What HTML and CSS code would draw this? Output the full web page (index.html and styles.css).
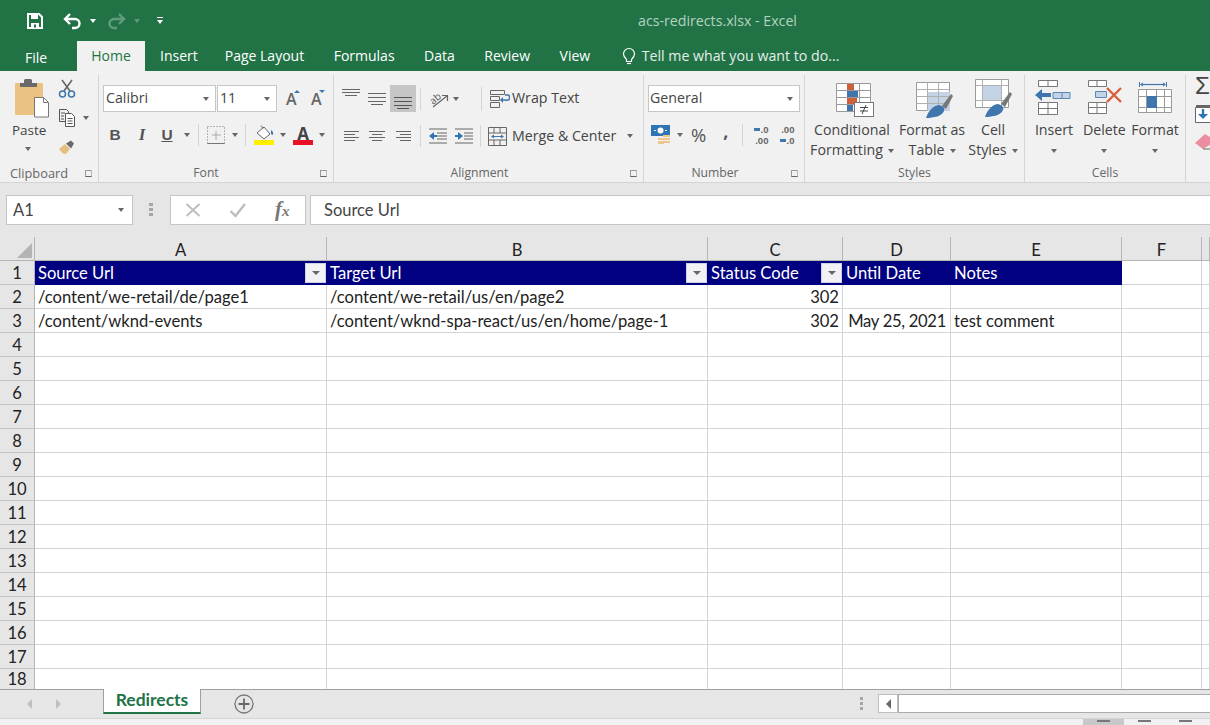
FILE: index.html
```html
<!DOCTYPE html>
<html lang="en">
<head>
<meta charset="utf-8">
<title>acs-redirects.xlsx - Excel</title>
<link rel="stylesheet" href="styles.css">
</head>
<body>
<div class="app">
  <header class="titlebar">
    <div class="qat">
      <svg class="q-save" width="18" height="18" viewBox="0 0 18 18"><path d="M2 2h11l3 3v11H2z" fill="none" stroke="#fff" stroke-width="2"/><path d="M5 2h7v5H5zM5 11h8v5H5z" fill="#fff"/><path d="M8 12.500h2v3H8z" fill="#217346"/></svg>
      <svg class="q-undo" width="20" height="18" viewBox="0 0 20 18"><path d="M8 2 3 7l5 5M3 7h10a4.500 4.500 0 0 1 0 9h-3" fill="none" stroke="#fff" stroke-width="2.400"/></svg>
      <i class="caret caret-white q-c1"></i>
      <svg class="q-redo" width="20" height="18" viewBox="0 0 20 18"><path d="M12 2l5 5-5 5M17 7H7a4.500 4.500 0 0 0 0 9h3" fill="none" stroke="#5f9c7d" stroke-width="2.400"/></svg>
      <i class="caret caret-dim q-c2"></i>
      <svg class="q-more" width="8" height="10" viewBox="0 0 8 10"><path d="M1 1.500h6" stroke="#fff" stroke-width="1"/><path d="M1 4h6L4 8z" fill="#fff"/></svg>
    </div>
    <div class="doc-title">acs-redirects.xlsx - Excel</div>
  </header>

  <nav class="tabs">
    <span class="tab tab-file">File</span>
    <span class="tab tab-active">Home</span>
    <span class="tab tab-insert">Insert</span>
    <span class="tab">Page Layout</span>
    <span class="tab">Formulas</span>
    <span class="tab">Data</span>
    <span class="tab">Review</span>
    <span class="tab">View</span>
    <span class="tell">
      <svg width="14" height="18" viewBox="0 0 14 18"><path d="M4.500 12.500C3 11 1.500 9.500 1.500 7a5.500 5.500 0 0 1 11 0c0 2.500-1.500 4-3 5.500v2h-5z" fill="none" stroke="#fff" stroke-width="1.200"/><path d="M5 16.500h4" stroke="#fff" stroke-width="1.200"/></svg>
      Tell me what you want to do...
    </span>
  </nav>

  <section class="ribbon">
    <div class="group g-clip">
      <div class="g-body clip-body">
        <div class="paste">
          <svg width="36" height="40" viewBox="0 0 36 40"><rect x="1" y="5" width="28" height="32" rx="1" fill="#eac282"/><path d="M6 9V5h4V2a2 2 0 0 1 2-1h4a2 2 0 0 1 2 1v3h5v4z" fill="#6a6a6a"/><path d="M20.500 19.500h9l5 5v14.500h-14z" fill="#fff" stroke="#777"/><path d="M29.500 19.500v5h5" fill="none" stroke="#777"/></svg>
          <span class="paste-label">Paste</span>
          <i class="caret"></i>
        </div>
        <div class="clip-tools">
          <svg width="18" height="19" viewBox="0 0 18 19"><path d="M4 1l8 11M14 1L6 12" stroke="#666" stroke-width="1.600" fill="none"/><circle cx="4.500" cy="15" r="3" fill="none" stroke="#3f76ad" stroke-width="1.500"/><circle cx="13.500" cy="15" r="3" fill="none" stroke="#3f76ad" stroke-width="1.500"/></svg>
          <div class="copy-row">
            <svg width="18" height="19" viewBox="0 0 18 19"><path d="M1.500 1.500h7l2 2v10h-9z" fill="#f1f1f1" stroke="#555"/><path d="M7.500 5.500h6l3 3v10h-9z" fill="#fff" stroke="#555"/><path d="M3 5h4M3 8h3M3 11h3M9.500 10.500h5M9.500 13h5M9.500 15.500h5" stroke="#555"/></svg>
            <i class="caret"></i>
          </div>
          <svg width="18" height="16" viewBox="0 0 18 16"><path d="M1 10l6-5 5 5-4 5c-3 0-5-2-7-5z" fill="#e6bf80"/><path d="M8 4.500l5-3 3 3-3 5z" fill="#6a6a6a"/></svg>
        </div>
      </div>
      <div class="g-label">Clipboard<i class="launcher"></i></div>
    </div>

    <div class="group g-font">
      <div class="g-body">
        <div class="font-row1">
          <div class="select font-name"><span>Calibri</span><i class="caret"></i></div>
          <div class="select font-size"><span>11</span><i class="caret"></i></div>
          <span class="grow">A<i class="tri-up"></i></span>
          <span class="grow grow2">A<i class="tri-down"></i></span>
        </div>
        <div class="font-row2">
          <b class="fmt">B</b>
          <i class="fmt fmt-i">I</i>
          <u class="fmt fmt-u">U</u>
          <i class="caret"></i>
          <i class="vsep"></i>
          <svg class="border-ic" width="18" height="18" viewBox="0 0 18 18"><path d="M.5.500h17v17H.5z" fill="none" stroke="#777" stroke-dasharray="1 2"/><path d="M9 5v9M5 9h9" stroke="#aaa" fill="none"/><path d="M.5 17.500h17" stroke="#777"/></svg>
          <i class="caret"></i>
          <i class="vsep"></i>
          <svg class="fill-ic" width="21" height="22" viewBox="0 0 21 22"><path d="M3 9l7-6 6 7-6 5z" fill="#fff" stroke="#666"/><path d="M7 1.500l2 3" stroke="#666"/><path d="M17 6c2 1 2.500 3 2 5l-2-1z" fill="#3f76ad"/><rect y="16" width="20" height="5" fill="#ffee00"/></svg>
          <i class="caret"></i>
          <span class="color-a">A</span>
          <i class="caret"></i>
        </div>
      </div>
      <div class="g-label">Font<i class="launcher"></i></div>
    </div>

    <div class="group g-align">
      <div class="g-body">
        <div class="align-row1">
          <svg width="18" height="8" viewBox="0 0 18 8"><path d="M0 .5h18M0 3.500h18M3 6.500h12" stroke="#666"/></svg>
          <svg width="18" height="12" viewBox="0 0 18 12"><path d="M0 .5h18M0 4.500h18M0 8.500h18M3 11.500h12" stroke="#666"/></svg>
          <span class="align-active"><svg width="18" height="12" viewBox="0 0 18 12"><path d="M0 .5h18M0 4.500h18M0 8.500h18M3 11.500h12" stroke="#555"/></svg></span>
          <i class="vsep"></i>
          <svg class="orient-ic" width="24" height="22" viewBox="-2 -2 24 22"><text class="orient-text" x="1" y="12" transform="rotate(-40 7 8)">ab</text><path d="M5 17L19 6M14 5.500h5.500V11" fill="none" stroke="#666" stroke-width="1.200"/></svg>
          <i class="caret"></i>
          <i class="vsep vsep-wrap"></i>
          <svg width="20" height="18" viewBox="0 0 20 18"><path d="M.5.500h14v4H.5zM.5 6.500h9v4h-9zM.5 12.500h9v5h-9z" fill="none" stroke="#666"/><path d="M11 10h5a2.500 2.500 0 0 0 2-5h-3" fill="none" stroke="#3f76ad" stroke-width="1.600"/><path d="M13 7l-3 3 3 3z" fill="#3f76ad"/></svg>
          <span class="btn-text">Wrap Text</span>
        </div>
        <div class="align-row2">
          <svg width="15" height="11" viewBox="0 0 15 11"><path d="M0 .5h15M0 3.500h11M0 6.500h15M0 9.500h11" stroke="#666"/></svg>
          <svg width="16" height="11" viewBox="0 0 16 11"><path d="M0 .5h16M3 3.500h10M0 6.500h16M3 9.500h10" stroke="#666"/></svg>
          <svg width="15" height="11" viewBox="0 0 15 11"><path d="M0 .5h15M4 3.500h11M0 6.500h15M4 9.500h11" stroke="#666"/></svg>
          <i class="vsep"></i>
          <svg width="18" height="16" viewBox="0 0 18 16"><path d="M0 1h18M8 5h10M8 8h10M8 11h10M0 15h18" stroke="#666"/><path d="M0 8l5-4v3h3v2H5v3z" fill="#2f75b5"/></svg>
          <svg width="18" height="16" viewBox="0 0 18 16"><path d="M0 1h18M9 5h9M9 8h9M9 11h9M0 15h18" stroke="#666"/><path d="M8 8L3 4v3H0v2h3v3z" fill="#2f75b5"/></svg>
          <i class="vsep vsep-wrap2"></i>
          <svg width="19" height="19" viewBox="0 0 19 19"><path d="M.5.500h18v18H.5zM.5 6h18M.5 13h18M6 .5V6M12 .5V6M6 13v5.500M12 13v5.500" fill="none" stroke="#666"/><path d="M4 9.500h11" stroke="#3f76ad"/><path d="M6 7.500l-3 2 3 2zM13 7.500l3 2-3 2z" fill="#3f76ad"/></svg>
          <span class="btn-text">Merge &amp; Center</span>
          <i class="caret caret-merge"></i>
        </div>
      </div>
      <div class="g-label">Alignment<i class="launcher"></i></div>
    </div>

    <div class="group g-num">
      <div class="g-body">
        <div class="select num-format"><span>General</span><i class="caret"></i></div>
        <div class="num-row2">
          <svg width="20" height="20" viewBox="0 0 20 20"><rect width="19" height="11" fill="#2f75b5"/><circle cx="9.500" cy="5.500" r="3" fill="#fff"/><path d="M3 5.500h2M14 5.500h2" stroke="#fff"/><path d="M7 13h6v2H7zM12 10h7v2h-7zM12 13h7v2h-7zM12 16h7v2h-7zM7 16h6v3H7z" fill="#eec58a"/></svg>
          <i class="caret"></i>
          <span class="pct">%</span>
          <span class="comma">,</span>
          <i class="vsep"></i>
          <span class="dec"><span class="dec-line"><i class="arr"></i>.0</span><span class="dec-line">.00</span></span>
          <span class="dec dec2"><span class="dec-line">.00</span><span class="dec-line"><i class="arr"></i>.0</span></span>
        </div>
      </div>
      <div class="g-label">Number<i class="launcher"></i></div>
    </div>

    <div class="group g-styles">
      <div class="g-body large-row">
        <div class="large l-cond">
          <svg width="38" height="34" viewBox="0 0 38 34"><path d="M.5.500h34v28H.5zM.5 7.500h34M.5 14.500h34M.5 21.500h34M11.500.5v28M23.500.5v28" fill="#fff" stroke="#9a9a9a"/><path d="M11 1h7v6h-7zM11 15h10v6H11z" fill="#d0603a"/><path d="M11 8h11v6H11zM11 22h6v6h-6z" fill="#3f76ad"/><rect x="18.500" y="19.500" width="19" height="14" fill="#fff" stroke="#777"/><path d="M24 24.500h8M24 28h8M30 22l-4 9" stroke="#444" fill="none"/></svg>
          <span class="large-text">Conditional<br>Formatting<i class="caret caret-inline"></i></span>
        </div>
        <div class="large l-table">
          <svg width="38" height="36" viewBox="0 0 38 36"><path d="M.5.500h33v28H.5z" fill="#fff" stroke="#9a9a9a"/><path d="M11 10h23v19H11z" fill="#c5d3e6"/><path d="M.5 7.500h33M.5 14.500h33M.5 21.500h33M11.500.5v28M22.500.5v28" fill="none" stroke="#b0b0b0"/><path d="M26 24l9-12 2 2-7 13z" fill="#777"/><path d="M10 36c2-6 6-12 13-13 4 1 6 3 5 6-2 5-10 7-18 7z" fill="#3f76ad"/></svg>
          <span class="large-text">Format as<br>Table<i class="caret caret-inline"></i></span>
        </div>
        <div class="large l-cell">
          <svg width="38" height="38" viewBox="0 0 38 38"><path d="M.5.500h33v28H.5z" fill="#fff" stroke="#9a9a9a"/><path d="M7 6h20v15H7z" fill="#c5d3e6"/><path d="M.5 6.500h33M.5 21.500h33M7.500.5v28M26.500.5v28" fill="none" stroke="#b0b0b0"/><path d="M26 25l9-12 2 2-7 13z" fill="#777"/><path d="M10 38c2-6 6-12 13-13 4 1 6 3 5 6-2 5-10 7-18 7z" fill="#3f76ad"/></svg>
          <span class="large-text">Cell<br>Styles<i class="caret caret-inline"></i></span>
        </div>
      </div>
      <div class="g-label">Styles</div>
    </div>

    <div class="group g-cells">
      <div class="g-body large-row">
        <div class="large c-insert">
          <svg width="36" height="36" viewBox="0 0 36 36"><path d="M3.500.500h19v6h-19zM13 .5v6M3.500 22.500h19v12h-19zM3.500 28.500h19M13 22.500v12" fill="#fff" stroke="#777"/><path d="M18 12.500h17v6H18zM27 12.500v6" fill="#c5d3e6" stroke="#5b87b5"/><path d="M0 15l7-6v4h9v4H7v4z" fill="#3f76ad"/></svg>
          <span class="large-text">Insert<br><i class="caret"></i></span>
        </div>
        <div class="large c-delete">
          <svg width="36" height="36" viewBox="0 0 36 36"><path d="M1.500.500h18v6h-18zM10 .5v6M1.500 22.500h18v11h-18zM1.500 27.500h18M10 22.500v11" fill="#fff" stroke="#777"/><path d="M8.500 11.500h11v6h-11z" fill="#c5d3e6" stroke="#5b87b5"/><path d="M20 8l14 14M34 8L20 22" stroke="#d9603f" stroke-width="2.400"/></svg>
          <span class="large-text">Delete<br><i class="caret"></i></span>
        </div>
        <div class="large c-format">
          <svg width="36" height="36" viewBox="0 0 36 36"><path d="M1.500 0v5M28.500 0v5" stroke="#3f76ad"/><path d="M3 2.500h24" stroke="#3f76ad" stroke-width="1.200"/><path d="M5 .5l-3 2 3 2zM25 .5l3 2-3 2z" fill="#3f76ad"/><path d="M.5 7.500h33v23H.5zM.5 14.500h33M.5 25.500h33M8.500 7.500v23M18.500 7.500v23M26.500 7.500v23" fill="#fff" stroke="#9a9a9a"/><path d="M9 14h10v12H9z" fill="#3f76ad"/></svg>
          <span class="large-text">Format<br><i class="caret"></i></span>
        </div>
      </div>
      <div class="g-label">Cells</div>
    </div>

    <div class="group g-edit">
      <span class="sigma">Σ</span>
      <svg class="edit-fill" width="16" height="18" viewBox="0 0 16 18"><path d="M.5 2.500h16v15H.5z" fill="#fff" stroke="#666"/><path d="M1 1h15" stroke="#666" stroke-width="2"/><path d="M8 4v8" stroke="#2f75b5" stroke-width="2.400"/><path d="M3 9h10l-5 5z" fill="#2f75b5"/></svg>
      <svg class="edit-erase" width="16" height="18" viewBox="0 0 16 18"><path d="M0 11L10 2l6 4v6l-8 5z" fill="#eb8ea0"/><path d="M8 17h8" stroke="#666"/></svg>
    </div>
  </section>

  <section class="formula-bar">
    <div class="namebox"><span>A1</span><i class="caret"></i></div>
    <svg class="grip" width="4" height="14" viewBox="0 0 4 14"><path d="M0 0h4v3H0zM0 5h4v3H0zM0 10h4v3H0z" fill="#a6a6a6"/></svg>
    <div class="fx-buttons">
      <svg width="16" height="16" viewBox="0 0 16 16"><path d="M1.500 2l13 12M14.500 2l-13 12" stroke="#bdbdbd" stroke-width="1.800"/></svg>
      <svg width="18" height="16" viewBox="0 0 18 16"><path d="M1.500 9l5 5L16 2" fill="none" stroke="#bdbdbd" stroke-width="2.400"/></svg>
      <span class="fx">f<span class="fx-x">x</span></span>
    </div>
    <div class="formula-input">Source Url</div>
  </section>

  <main class="sheet">
    <div class="corner"><i class="corner-tri"></i></div><div class="col-h">A</div><div class="col-h">B</div><div class="col-h">C</div><div class="col-h">D</div><div class="col-h">E</div><div class="col-h">F</div><div class="col-h"></div>

    <div class="row-h">1</div>
    <div class="c head"><span>Source Url</span><i class="filter"></i></div>
    <div class="c head"><span>Target Url</span><i class="filter"></i></div>
    <div class="c head"><span>Status Code</span><i class="filter"></i></div>
    <div class="c head"><span>Until Date</span></div>
    <div class="c head"><span>Notes</span></div>
    <div class="c"></div><div class="c"></div>

    <div class="row-h">2</div>
    <div class="c">/content/we-retail/de/page1</div>
    <div class="c">/content/we-retail/us/en/page2</div>
    <div class="c num">302</div>
    <div class="c"></div><div class="c"></div><div class="c"></div><div class="c"></div>

    <div class="row-h">3</div>
    <div class="c">/content/wknd-events</div>
    <div class="c">/content/wknd-spa-react/us/en/home/page-1</div>
    <div class="c num">302</div>
    <div class="c num date">May 25, 2021</div>
    <div class="c">test comment</div>
    <div class="c"></div><div class="c"></div>

    <div class="row-h">4</div><div class="c"></div><div class="c"></div><div class="c"></div><div class="c"></div><div class="c"></div><div class="c"></div><div class="c"></div>
    <div class="row-h">5</div><div class="c"></div><div class="c"></div><div class="c"></div><div class="c"></div><div class="c"></div><div class="c"></div><div class="c"></div>
    <div class="row-h">6</div><div class="c"></div><div class="c"></div><div class="c"></div><div class="c"></div><div class="c"></div><div class="c"></div><div class="c"></div>
    <div class="row-h">7</div><div class="c"></div><div class="c"></div><div class="c"></div><div class="c"></div><div class="c"></div><div class="c"></div><div class="c"></div>
    <div class="row-h">8</div><div class="c"></div><div class="c"></div><div class="c"></div><div class="c"></div><div class="c"></div><div class="c"></div><div class="c"></div>
    <div class="row-h">9</div><div class="c"></div><div class="c"></div><div class="c"></div><div class="c"></div><div class="c"></div><div class="c"></div><div class="c"></div>
    <div class="row-h">10</div><div class="c"></div><div class="c"></div><div class="c"></div><div class="c"></div><div class="c"></div><div class="c"></div><div class="c"></div>
    <div class="row-h">11</div><div class="c"></div><div class="c"></div><div class="c"></div><div class="c"></div><div class="c"></div><div class="c"></div><div class="c"></div>
    <div class="row-h">12</div><div class="c"></div><div class="c"></div><div class="c"></div><div class="c"></div><div class="c"></div><div class="c"></div><div class="c"></div>
    <div class="row-h">13</div><div class="c"></div><div class="c"></div><div class="c"></div><div class="c"></div><div class="c"></div><div class="c"></div><div class="c"></div>
    <div class="row-h">14</div><div class="c"></div><div class="c"></div><div class="c"></div><div class="c"></div><div class="c"></div><div class="c"></div><div class="c"></div>
    <div class="row-h">15</div><div class="c"></div><div class="c"></div><div class="c"></div><div class="c"></div><div class="c"></div><div class="c"></div><div class="c"></div>
    <div class="row-h">16</div><div class="c"></div><div class="c"></div><div class="c"></div><div class="c"></div><div class="c"></div><div class="c"></div><div class="c"></div>
    <div class="row-h">17</div><div class="c"></div><div class="c"></div><div class="c"></div><div class="c"></div><div class="c"></div><div class="c"></div><div class="c"></div>
    <div class="row-h">18</div><div class="c"></div><div class="c"></div><div class="c"></div><div class="c"></div><div class="c"></div><div class="c"></div><div class="c"></div>
  </main>

  <section class="sheetbar">
    <div class="nav-arrows"><i class="tri-left"></i><i class="tri-right"></i></div>
    <div class="sheet-tab">Redirects</div>
    <svg class="add-sheet" width="20" height="20" viewBox="0 0 20 20"><circle cx="10" cy="10" r="9" fill="none" stroke="#777" stroke-width="1.300"/><path d="M10 4.500v11M4.500 10h11" stroke="#666" stroke-width="1.800"/></svg>
    <svg class="grip sheet-grip" width="4" height="14" viewBox="0 0 4 14"><path d="M0 0h3v3H0zM0 5h3v3H0zM0 10h3v3H0z" fill="#a6a6a6"/></svg>
    <div class="hscroll"><div class="hscroll-btn"><i class="tri-left tri-dark"></i></div><div class="hscroll-track"></div></div>
  </section>

  <footer class="statusbar">
    <span class="view view-active"><i></i></span>
    <span class="view"><i></i></span>
    <span class="view"><i></i></span>
  </footer>
</div>
</body>
</html>
```
FILE: styles.css
```css
* { box-sizing: border-box; }
html, body { margin: 0; padding: 0; }
body { width: 1210px; height: 725px; overflow: hidden; background: #f1f1f1; font-family: "Open Sans", "Noto Sans", sans-serif; color: #444; }
i { font-style: normal; }
svg { display: block; flex: none; }
.app { width: 1210px; height: 725px; display: flex; flex-direction: column; overflow: hidden; }

.caret { display: inline-block; width: 0; height: 0; border-left: 3.500px solid transparent; border-right: 3.500px solid transparent; border-top: 4px solid #666; flex: none; }
.caret-white { border-top-color: #fff; }
.caret-dim { border-top-color: #5f9c7d; }
.vsep { display: block; width: 1px; height: 26px; background: #d4d4d4; flex: none; }

/* Title bar */
.titlebar { height: 41px; background: #217346; display: flex; align-items: center; flex: none; }
.qat { display: flex; align-items: center; width: 638px; padding-left: 26px; }
.q-undo { margin-left: 18px; }
.q-c1 { margin-left: 8px; }
.q-redo { margin-left: 11px; }
.q-c2 { margin-left: 7px; }
.q-more { margin-left: 16px; }
.doc-title { font-size: 14.200px; color: #b4d2c1; }

/* Tabs */
.tabs { height: 30px; background: #217346; display: flex; flex: none; font-size: 14px; color: #fff; padding-left: 25px; }
.tab { display: flex; align-items: center; padding-bottom: 1px; margin-right: 29.500px; white-space: nowrap; }
.tab-file { width: 52px; margin-right: 0; padding: 2px 0 0; }
.tab-active { width: 68px; margin-right: 15px; justify-content: center; background: #f1f1f1; color: #217346; }
.tab-insert { margin-right: 27px; }
.tell { display: flex; align-items: center; gap: 6px; margin-left: 2px; padding-bottom: 1px; white-space: nowrap; color: #e4efe9; font-size: 14.200px; }

/* Ribbon */
.ribbon { height: 112px; display: flex; flex: none; background: #f1f1f1; border-bottom: 1px solid #d4d4d4; }
.group { position: relative; height: 107px; margin-top: 4px; display: flex; flex-direction: column; border-right: 1px solid #d4d4d4; flex: none; }
.g-body { flex: 1; min-height: 0; }
.g-label { height: 16px; margin-bottom: 1px; text-align: center; font-size: 12.200px; line-height: 16px; color: #666; position: relative; flex: none; }
.launcher { position: absolute; right: 6px; top: 5px; width: 7px; height: 7px; border-left: 1px solid #999; border-top: 1px solid #999; border-right: 1px solid #bbb; border-bottom: 1px solid #666; }

.g-clip { width: 99px; }
.g-clip .g-label { text-align: left; padding-left: 10px; font-size: 12.800px; }
.clip-body { display: flex; }
.paste { width: 58px; display: flex; flex-direction: column; align-items: flex-start; padding: 3px 0 0 14px; }
.paste-label { font-size: 13.500px; line-height: 18px; margin: 3px 0 0 -2px; }
.paste .caret { margin: 8px 0 0 11px; }
.clip-tools { display: flex; flex-direction: column; padding-top: 4px; gap: 10px; }
.copy-row { display: flex; align-items: center; gap: 7px; }
.clip-tools > svg:last-child { margin-top: 2px; }

.g-font { width: 235px; }
.g-font .g-label { padding-right: 20px; }
.g-font .g-body { padding: 10px 0 0 4px; }
.font-row1 { display: flex; align-items: center; height: 27px; }
.select { background: #fff; border: 1px solid #c6c6c6; height: 27px; display: flex; align-items: center; justify-content: space-between; padding: 0 6px 2px 2px; font-size: 14.200px; color: #444; }
.select .caret { margin-top: 2px; }
.font-name { width: 113px; }
.font-size { width: 60px; margin-left: 1px; }
.grow { position: relative; width: 14px; margin-left: 9px; font-size: 16px; font-weight: 600; color: #666; line-height: 20px; }
.grow2 { margin-left: 11px; }
.tri-up, .tri-down { position: absolute; top: 1px; right: 0; width: 0; height: 0; border-left: 3px solid transparent; border-right: 3px solid transparent; }
.tri-up { border-bottom: 3px solid #3f76ad; }
.tri-down { border-top: 3px solid #3f76ad; }
.font-row2 { display: flex; align-items: center; height: 26px; margin-top: 10px; padding-left: 6px; }
.font-row2 .vsep { height: 22px; }
.fmt { width: 12px; font-family: "Liberation Sans", sans-serif; font-size: 15.500px; text-align: center; color: #555; line-height: 20px; }
.font-row2 b.fmt { font-weight: 700; }
.fmt-i { margin-left: 15px; font-family: "Liberation Serif", serif; font-style: italic; font-weight: 700; font-size: 17px; }
.fmt-u { margin-left: 13px; font-weight: 700; }
.fmt-u + .caret { margin-left: 11px; }
.fmt-u + .caret + .vsep { margin-left: 8px; }
.border-ic { margin-left: 8px; }
.border-ic + .caret { margin-left: 7px; }
.border-ic + .caret + .vsep { margin-left: 7px; }
.fill-ic { margin: 0 0 0 8px; }
.fill-ic + .caret { margin-left: 5px; }
.color-a { width: 20px; margin-left: 7px; font-size: 17px; font-weight: 700; line-height: 15px; height: 19px; text-align: center; color: #444; border-bottom: 5px solid #e81123; }
.color-a + .caret { margin-left: 6px; }

.g-align { width: 310px; }
.g-align .g-label { padding-right: 18px; }
.g-align .g-body { padding: 10px 0 0 8px; }
.align-row1 { display: flex; align-items: center; height: 27px; }
.align-row1 > svg:nth-child(1) { margin-bottom: 12px; }
.align-row1 > svg:nth-child(2) { margin-left: 8px; }
.align-active { width: 26px; height: 27px; margin-left: 4px; background: #c6c6c6; display: flex; align-items: flex-end; justify-content: center; padding-bottom: 3px; }
.align-row1 .vsep { margin-left: 4px; height: 22px; }
.align-row1 .vsep + .orient-ic { margin: 0 -2px 0 5px; }
.align-row1 .caret { margin-left: 5px; }
.align-row1 .vsep.vsep-wrap { margin-left: 22px; height: 24px; }
.align-row1 .vsep-wrap + svg { margin-left: 8px; }
.orient-text { font-family: "Open Sans", sans-serif; font-size: 10px; fill: #555; }
.btn-text { font-size: 14.200px; margin-left: 2px; padding-bottom: 2px; white-space: nowrap; }
.align-row2 { display: flex; align-items: center; height: 26px; margin-top: 11px; padding-left: 2px; }
.align-row2 .vsep { height: 22px; }
.align-row2 > svg:nth-child(2) { margin-left: 10px; }
.align-row2 > svg:nth-child(3) { margin-left: 11px; }
.align-row2 > .vsep:nth-child(4) { margin-left: 9px; }
.align-row2 > svg:nth-child(5) { margin-left: 8px; }
.align-row2 > svg:nth-child(6) { margin-left: 8px; }
.align-row2 > .vsep-wrap2 { margin-left: 7px; }
.align-row2 > svg:nth-child(8) { margin-left: 7px; }
.align-row2 .btn-text { margin-left: 5px; }
.caret-merge { margin-left: 11px; }

.g-num { width: 161px; }
.g-num .g-label { padding-right: 18px; }
.g-num .g-body { padding: 10px 0 0 4px; }
.num-format { width: 152px; padding-left: 1px; }
.num-row2 { display: flex; align-items: center; height: 26px; margin-top: 10px; padding-left: 3px; }
.num-row2 > .caret { margin-left: 6px; }
.num-row2 .vsep { height: 22px; margin-left: 14px; }
.pct { font-size: 18.500px; margin-left: 8px; color: #555; line-height: 20px; }
.comma { font-size: 18px; font-weight: 700; margin-left: 17px; line-height: 18px; position: relative; top: -4px; color: #555; }
.dec { display: flex; flex-direction: column; margin-left: 9px; font-family: "Liberation Sans", sans-serif; font-size: 9.500px; line-height: 11px; font-weight: 700; color: #666; align-items: flex-end; width: 16px; }
.dec2 { margin-left: 10px; }
.dec-line { display: flex; align-items: center; height: 11px; }
.arr { width: 6px; height: 3px; background: #3f76ad; margin-right: 1px; display: block; }

.g-styles { width: 220px; }
.g-cells { width: 161px; }
.large-row { display: flex; }
.large { display: grid; grid-template-rows: 45px auto; justify-items: center; text-align: center; }
.large-text { display: block; font-size: 14.200px; line-height: 20px; white-space: nowrap; }
.large-text .caret { vertical-align: middle; }
.caret-inline { margin-left: 5px; }
.l-cond { width: 94px; }
.l-cond svg { margin: 8px 0 0 5px; }
.l-table { width: 64px; }
.l-table svg { margin: 7px 0 0 5px; }
.l-cell { width: 60px; }
.l-cell svg { margin: 4px 0 0 1px; }
.c-insert { width: 58px; }
.c-insert svg { margin: 5px 0 0 -2px; }
.c-delete { width: 42px; }
.c-delete svg { margin: 5px 0 0 2px; }
.c-format { width: 60px; }
.c-format svg { margin: 7px 0 0 2px; }

.g-edit { border-right: 0; padding: 0 0 0 9px; width: 25px; }
.sigma { font-family: "Liberation Sans", sans-serif; font-size: 24px; line-height: 22px; color: #444; }
.edit-fill { margin-top: 8px; }
.edit-erase { margin-top: 9px; }

/* Formula bar */
.formula-bar { height: 54px; flex: none; background: #e6e6e6; display: flex; align-items: flex-start; padding: 12px 0 0 6px; }
.namebox { width: 127px; height: 30px; background: #fff; border: 1px solid #c6c6c6; display: flex; align-items: center; justify-content: space-between; padding: 0 8px 0 6px; font-family: Lato, sans-serif; font-size: 16.500px; color: #444; }
.formula-bar .grip { margin: 8px 0 0 16px; }
.fx-buttons { width: 136px; height: 30px; margin-left: 17px; background: #fff; border: 1px solid #c6c6c6; display: flex; align-items: center; padding-left: 14px; gap: 28px; }
.fx { font-family: "Liberation Serif", serif; font-style: italic; font-weight: 700; font-size: 21px; line-height: 24px; color: #777; }
.fx-x { font-size: 15px; }
.formula-input { flex: 1; height: 30px; margin-left: 4px; background: #fff; border: 1px solid #c6c6c6; border-right: 0; padding-left: 13px; line-height: 28px; font-family: Lato, sans-serif; font-size: 16.500px; color: #444; }

/* Sheet */
.sheet { flex: none; height: 452px; background: #fff; display: grid; grid-template-columns: 35px 292px 381px 135px 108px 171px 80px 8px; grid-template-rows: repeat(18, 24px) 20px; overflow: hidden; font-family: Lato, "Open Sans", sans-serif; font-size: 16.600px; color: #222; }
.corner { background: #e6e6e6; border-right: 1px solid #b5b5b5; border-bottom: 1px solid #b5b5b5; position: relative; }
.corner-tri { position: absolute; right: 2px; bottom: 2px; width: 0; height: 0; border-left: 15px solid transparent; border-bottom: 15px solid #b4b4b4; }
.col-h { background: #e6e6e6; border-right: 1px solid #b5b5b5; border-bottom: 1px solid #b5b5b5; display: flex; align-items: center; justify-content: center; padding-top: 2px; }
.row-h { background: #e6e6e6; border-right: 1px solid #b5b5b5; border-bottom: 1px solid #c6c6c6; display: flex; align-items: center; justify-content: center; padding-top: 1px; }
.row-h:nth-last-child(8) { border-bottom: 0; padding-top: 0; line-height: 20px; }
.c { border-right: 1px solid #d4d4d4; border-bottom: 1px solid #d4d4d4; padding: 0 0 0 3px; line-height: 24px; white-space: nowrap; overflow: visible; }
.c:nth-last-child(-n+7) { border-bottom: 0; }
.num { text-align: right; padding-right: 3px; }
.date { padding-right: 4px; letter-spacing: -.3px; }
.head { background: #000080; color: #fff; border: 0; display: flex; align-items: center; justify-content: space-between; padding-right: 1px; }
.filter { width: 21px; height: 20px; background: #f1f1f6; border: 1px solid #cfd0e0; display: flex; align-items: center; justify-content: center; }
.filter::after { content: ""; width: 0; height: 0; border-left: 4px solid transparent; border-right: 4px solid transparent; border-top: 4px solid #666; }

/* Sheet bar */
.sheetbar { height: 29px; flex: none; background: #e6e6e6; border-top: 1px solid #9f9f9f; display: flex; align-items: flex-start; }
.nav-arrows { width: 103px; height: 28px; display: flex; align-items: center; gap: 24px; padding-left: 27px; }
.tri-left { width: 0; height: 0; border-top: 5px solid transparent; border-bottom: 5px solid transparent; border-right: 5px solid #c0c0c0; }
.tri-right { width: 0; height: 0; border-top: 5px solid transparent; border-bottom: 5px solid transparent; border-left: 5px solid #c0c0c0; }
.tri-dark { border-right-color: #666; }
.sheet-tab { width: 98px; height: 25px; background: #fff; border-left: 1px solid #9f9f9f; border-right: 1px solid #9f9f9f; border-bottom: 2px solid #217346; margin-top: -1px; color: #217346; font-family: Lato, sans-serif; font-weight: 700; font-size: 17.500px; text-align: center; line-height: 21px; }
.add-sheet { margin: 4px 0 0 33px; }
.sheet-grip { margin: 7px 0 0 606px; }
.hscroll { display: flex; margin: 4px 0 0 14px; flex: 1; height: 19px; }
.hscroll-btn { width: 20px; background: #fff; border: 1px solid #bdbdbd; display: flex; align-items: center; justify-content: center; }
.hscroll-track { flex: 1; background: #fff; border: 1px solid #ababab; border-right: 0; }

/* Status bar */
.statusbar { height: 7px; flex: none; background: #f1f1f1; border-top: 1px solid #d4d4d4; display: flex; padding-left: 1083px; overflow: hidden; }
.view { width: 41px; height: 7px; display: flex; justify-content: center; padding-top: 1px; }
.view i { display: block; width: 13px; height: 2px; background: #777; }
.view-active { background: #c8c8c8; }
```
